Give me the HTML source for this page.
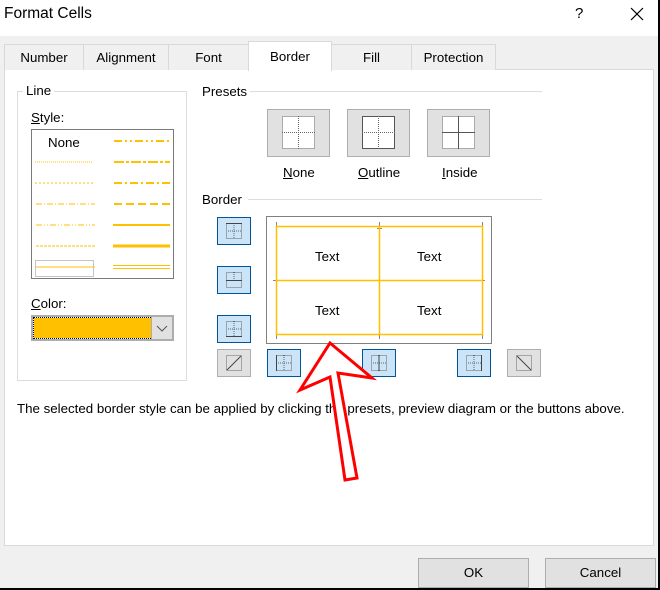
<!DOCTYPE html><html><head><style>
*{margin:0;padding:0;box-sizing:border-box}
body{width:660px;height:590px;background:#f0f0f0;font-family:"Liberation Sans",sans-serif;font-size:13.3px;color:#000;position:relative;overflow:hidden}
.a{position:absolute}
.tab{position:absolute;top:44px;height:26px;border:1px solid #d9d9d9;border-bottom:none;background:#f0f0f0;text-align:center;line-height:26px}
.gb{position:absolute;border:1px solid #dcdcdc}
.pb{position:absolute;width:63px;height:48px;background:#e1e1e1;border:1px solid #adadad}
.bb{position:absolute;width:34px;height:28px;background:#cce4f7;border:1px solid #005499}
.gbtn{position:absolute;width:34px;height:28px;background:#e1e1e1;border:1px solid #adadad}
.btn{position:absolute;top:558px;width:111px;height:30px;background:#e1e1e1;border:1px solid #adadad;text-align:center;line-height:28px}
.lbl{position:absolute;background:#fff;padding:0 3px}
</style></head><body>
<div class="a" style="left:0;top:0;width:660px;height:36px;background:#fff"></div>
<div class="a" style="left:4px;top:5px;font-size:15.5px">Format Cells</div>
<div class="a" style="left:575px;top:5px;font-size:15px">?</div>
<svg class="a" style="left:630px;top:7px" width="14" height="14"><path d="M1 1L13 13M13 1L1 13" stroke="#000" stroke-width="1.2"/></svg>
<div class="a" style="right:0;top:0;width:2px;height:590px;background:#000"></div>
<div class="a" style="left:0;bottom:0;width:660px;height:2px;background:#000"></div>
<div class="a" style="left:4px;top:69px;width:650px;height:477px;background:#fff;border:1px solid #d9d9d9"></div>
<div class="tab" style="left:4px;width:80px">Number</div>
<div class="tab" style="left:83px;width:86px">Alignment</div>
<div class="tab" style="left:168px;width:81px">Font</div>
<div class="tab" style="left:248px;top:41px;height:30px;width:84px;background:#fff;line-height:30px">Border</div>
<div class="tab" style="left:331px;width:81px">Fill</div>
<div class="tab" style="left:411px;width:85px">Protection</div>

<div class="gb" style="left:17px;top:91px;width:170px;height:290px"></div>
<div class="lbl" style="left:23px;top:83px">Line</div>
<div class="a" style="left:31px;top:110px"><u>S</u>tyle:</div>
<div class="a" style="left:31px;top:129px;width:143px;height:150px;border:1px solid #7a7a7a;background:#fff">
<div class="a" style="left:16px;top:5px">None</div>
<svg class="a" style="left:0;top:0" width="141" height="148">
<g stroke="#ffc000" fill="none">
<line x1="3" y1="32" x2="60" y2="32" stroke-dasharray="1 1"/>
<line x1="3" y1="53" x2="63" y2="53" stroke-dasharray="2 2"/>
<line x1="4" y1="74" x2="63" y2="74" stroke-dasharray="6 2 1 2"/>
<line x1="4" y1="95" x2="63" y2="95" stroke-dasharray="6 2 1 2 1 2"/>
<line x1="4" y1="116" x2="63" y2="116" stroke-dasharray="3 1"/>
<line x1="4" y1="137" x2="63" y2="137"/>
<rect x="3.5" y="130.5" width="58" height="16" stroke="#888" stroke-dasharray="1 1"/>
<line x1="82" y1="11" x2="138" y2="11" stroke-width="2" stroke-dasharray="8 3 2 3 2 3"/>
<line x1="82" y1="32" x2="138" y2="32" stroke-width="2" stroke-dasharray="10 2 3 2"/>
<line x1="82" y1="53" x2="138" y2="53" stroke-width="2" stroke-dasharray="8 3 2 3"/>
<line x1="82" y1="74" x2="138" y2="74" stroke-width="2" stroke-dasharray="8 4"/>
<line x1="81" y1="95" x2="138" y2="95" stroke-width="2"/>
<line x1="81" y1="116" x2="138" y2="116" stroke-width="3"/>
<line x1="81" y1="135.5" x2="138" y2="135.5"/><line x1="81" y1="138.5" x2="138" y2="138.5"/>
</g></svg></div>
<div class="a" style="left:31px;top:296px"><u>C</u>olor:</div>
<div class="a" style="left:31px;top:315px;width:143px;height:26px;border:2px solid #adadad;background:#fff">
<div class="a" style="left:1px;top:1px;width:118px;height:20px;background:#ffc000;outline:1px dotted #000"></div>
<div class="a" style="right:0;top:0;width:21px;height:22px;background:#e1e1e1;border-left:1px solid #adadad">
<svg width="20" height="22"><path d="M5 9l5 5 5-5" fill="none" stroke="#555"/></svg></div></div>

<div class="a" style="left:250px;top:91px;width:292px;height:1px;background:#dcdcdc"></div>
<div class="a" style="left:202px;top:84px">Presets</div>
<div class="pb" style="left:267px;top:109px"><svg width="61" height="46"><rect x="14.5" y="6.5" width="32" height="32" fill="#fff" stroke="#666" stroke-dasharray="1 1"/><path d="M30.5 6v33M14 22.5h33" stroke="#666" stroke-dasharray="1 1"/></svg></div>
<div class="pb" style="left:347px;top:109px"><svg width="61" height="46"><rect x="14.5" y="6.5" width="32" height="32" fill="#fff" stroke="#555"/><path d="M30.5 6v33M14 22.5h33" stroke="#666" stroke-dasharray="1 1"/></svg></div>
<div class="pb" style="left:427px;top:109px"><svg width="61" height="46"><rect x="14.5" y="6.5" width="32" height="32" fill="#fff" stroke="#666" stroke-dasharray="1 1"/><path d="M30.5 6v33M14 22.5h33" stroke="#555"/></svg></div>
<div class="a" style="left:283px;top:165px"><u>N</u>one</div>
<div class="a" style="left:358px;top:165px"><u>O</u>utline</div>
<div class="a" style="left:442px;top:165px"><u>I</u>nside</div>

<div class="a" style="left:248px;top:199px;width:294px;height:1px;background:#dcdcdc"></div>
<div class="a" style="left:202px;top:192px">Border</div>
<div class="a" style="left:266px;top:216px;width:226px;height:128px;border:1px solid #808080;background:#fff">
<svg class="a" style="left:0;top:0" width="224" height="126">
<g stroke="#888"><path d="M9.5 5v6M112.5 5v6M215.5 5v6M9.5 116v6M112.5 116v6M215.5 116v6M6 63.5h5M213 63.5h5M110 11.5h5M110 117.5h5"/></g>
<rect x="9.5" y="9.5" width="206" height="108" fill="none" stroke="#ffc000" stroke-width="1.5"/>
<path d="M112.5 9.5v108M9.5 63.5h206" stroke="#ffc000" stroke-width="1.5"/></svg>
<div class="a" style="left:48px;top:32px">Text</div><div class="a" style="left:150px;top:32px">Text</div>
<div class="a" style="left:48px;top:86px">Text</div><div class="a" style="left:150px;top:86px">Text</div></div>

<div class="bb" style="left:217px;top:217px"><svg width="32" height="26"><rect x="8.5" y="5.5" width="15" height="15" fill="none" stroke="#666" stroke-dasharray="1 1"/><path d="M16 5v16M8 13h16" stroke="#666" stroke-dasharray="1 1"/><path d="M8 5.5h16" stroke="#444"/></svg></div>
<div class="bb" style="left:217px;top:266px"><svg width="32" height="26"><rect x="8.5" y="5.5" width="15" height="15" fill="none" stroke="#666" stroke-dasharray="1 1"/><path d="M16 5v8" stroke="#666" stroke-dasharray="1 1"/><path d="M8 13.5h16" stroke="#444"/></svg></div>
<div class="bb" style="left:217px;top:315px"><svg width="32" height="26"><rect x="8.5" y="5.5" width="15" height="15" fill="none" stroke="#666" stroke-dasharray="1 1"/><path d="M16 5v16M8 13h16" stroke="#666" stroke-dasharray="1 1"/><path d="M8 20.5h16" stroke="#444"/></svg></div>
<div class="gbtn" style="left:217px;top:349px"><svg width="32" height="26"><rect x="8.5" y="5.5" width="15" height="15" fill="none" stroke="#666" stroke-dasharray="1 1"/><path d="M9 20L23 6" stroke="#444"/></svg></div>
<div class="bb" style="left:267px;top:349px"><svg width="32" height="26"><rect x="8.5" y="5.5" width="15" height="15" fill="none" stroke="#666" stroke-dasharray="1 1"/><path d="M16 5v16M8 13h16" stroke="#666" stroke-dasharray="1 1"/><path d="M8.5 5v16" stroke="#444"/></svg></div>
<div class="bb" style="left:362px;top:349px"><svg width="32" height="26"><rect x="8.5" y="5.5" width="15" height="15" fill="none" stroke="#666" stroke-dasharray="1 1"/><path d="M8 13h16" stroke="#666" stroke-dasharray="1 1"/><path d="M16 5v16" stroke="#444"/></svg></div>
<div class="bb" style="left:457px;top:349px"><svg width="32" height="26"><rect x="8.5" y="5.5" width="15" height="15" fill="none" stroke="#666" stroke-dasharray="1 1"/><path d="M16 5v16M8 13h16" stroke="#666" stroke-dasharray="1 1"/><path d="M23.5 5v16" stroke="#444"/></svg></div>
<div class="gbtn" style="left:507px;top:349px"><svg width="32" height="26"><rect x="8.5" y="5.5" width="15" height="15" fill="none" stroke="#666" stroke-dasharray="1 1"/><path d="M9 6L23 20" stroke="#444"/></svg></div>

<div class="a" style="left:17px;top:401px">The selected border style can be applied by clicking the presets, preview diagram or the buttons above.</div>

<svg class="a" style="left:0;top:0" width="660" height="590"><path d="M330 343L372 378L338 373L357 478L345 480L330 377L300 390Z" fill="#fff" stroke="#f00" stroke-width="3" stroke-linejoin="miter"/></svg>

<div class="btn" style="left:418px">OK</div>
<div class="btn" style="left:545px">Cancel</div>
</body></html>
